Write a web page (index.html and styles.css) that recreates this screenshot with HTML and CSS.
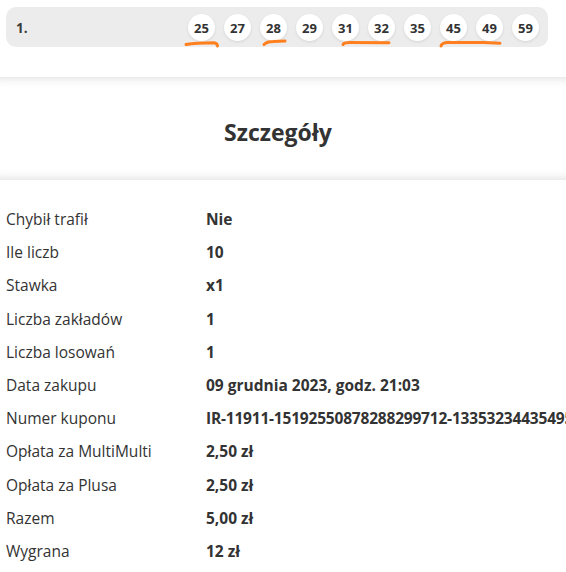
FILE: index.html
```html
<!DOCTYPE html>
<html lang="pl">
<head>
<meta charset="utf-8">
<title>Szczegóły</title>
<link rel="stylesheet" href="styles.css">
</head>
<body>
<div class="page">
  <div class="bet">
    <span class="bet-no">1.</span>
    <div class="balls">
      <span class="ball">25</span>
      <span class="ball">27</span>
      <span class="ball">28</span>
      <span class="ball">29</span>
      <span class="ball">31</span>
      <span class="ball">32</span>
      <span class="ball">35</span>
      <span class="ball">45</span>
      <span class="ball">49</span>
      <span class="ball">59</span>
    </div>
  </div>
  <svg class="marks" width="566" height="60" viewBox="0 0 566 60" aria-hidden="true">
    <path d="M186 44.5 Q 196 42.8 214 42.8 Q 217 43 217.5 46"/>
    <path d="M264 44.5 Q 267 41.5 273 41.5 L 285 41"/>
    <path d="M343 44.5 Q 344 42.5 350 42.5 L 389 42.8"/>
    <path d="M441 46 Q 442 42.5 448 42.5 L 484 42.5 L 500 43.2"/>
  </svg>

  <section class="heading">
    <h2 class="heading-title">Szczegóły</h2>
  </section>

  <dl class="details">
    <div class="row"><dt>Chybił trafił</dt><dd>Nie</dd></div>
    <div class="row"><dt>Ile liczb</dt><dd>10</dd></div>
    <div class="row"><dt>Stawka</dt><dd>x1</dd></div>
    <div class="row"><dt>Liczba zakładów</dt><dd>1</dd></div>
    <div class="row"><dt>Liczba losowań</dt><dd>1</dd></div>
    <div class="row"><dt>Data zakupu</dt><dd>09 grudnia 2023, godz. 21:03</dd></div>
    <div class="row"><dt>Numer kuponu</dt><dd class="coupon">IR-11911-15192550878288299712-1335323443549581277</dd></div>
    <div class="row"><dt>Opłata za MultiMulti</dt><dd>2,50 zł</dd></div>
    <div class="row"><dt>Opłata za Plusa</dt><dd>2,50 zł</dd></div>
    <div class="row"><dt>Razem</dt><dd>5,00 zł</dd></div>
    <div class="row"><dt>Wygrana</dt><dd>12 zł</dd></div>
  </dl>
</div>
</body>
</html>
```

FILE: styles.css
```css
html, body {
  margin: 0;
  padding: 0;
  background: #ffffff;
  overflow: hidden;
}

body {
  font-family: "Open Sans", "Noto Sans", sans-serif;
  color: #333333;
}

.page {
  position: relative;
  width: 566px;
  height: 572px;
  overflow: hidden;
  padding-top: 7px;
  box-sizing: border-box;
}

.bet {
  margin-left: 6px;
  width: 542px;
  height: 40px;
  box-sizing: border-box;
  padding: 1px 9px 0 10px;
  background: #ececec;
  border-radius: 10px;
  display: flex;
  align-items: center;
}

.bet-no {
  font-size: 13.5px;
  font-weight: 700;
  color: #3a3a3a;
}

.balls {
  margin-left: auto;
  display: flex;
  gap: 9px;
}

.ball {
  width: 27px;
  height: 27px;
  border-radius: 50%;
  background: #ffffff;
  box-shadow: 0 1px 3px rgba(0, 0, 0, 0.10);
  display: flex;
  align-items: center;
  justify-content: center;
  font-size: 13px;
  font-weight: 700;
  color: #333333;
}

.marks {
  position: absolute;
  left: 0;
  top: 0;
  pointer-events: none;
}

.marks path {
  fill: none;
  stroke: #ff7f1e;
  stroke-width: 3;
  stroke-linecap: round;
  stroke-linejoin: round;
}

.heading {
  margin-top: 30px;
  height: 103px;
  display: flex;
  align-items: center;
  justify-content: center;
  padding-right: 10px;
  box-shadow: inset 0 12px 12px -12px rgba(0, 0, 0, 0.16),
              inset 0 -12px 12px -12px rgba(0, 0, 0, 0.16);
}

.heading-title {
  margin: 0;
  padding-top: 6px;
  font-size: 23px;
  font-weight: 700;
  color: #333333;
}

.details {
  margin: 23px 0 0 0;
  padding-left: 6px;
  font-size: 15.5px;
}

.row {
  display: grid;
  grid-template-columns: 200px auto;
  line-height: 33.2px;
  white-space: nowrap;
}

.row dt {
  margin: 0;
  color: #333333;
}

.row dd {
  margin: 0;
  font-weight: 700;
  color: #333333;
}

.row dd.coupon {
  letter-spacing: -0.2px;
}
```
